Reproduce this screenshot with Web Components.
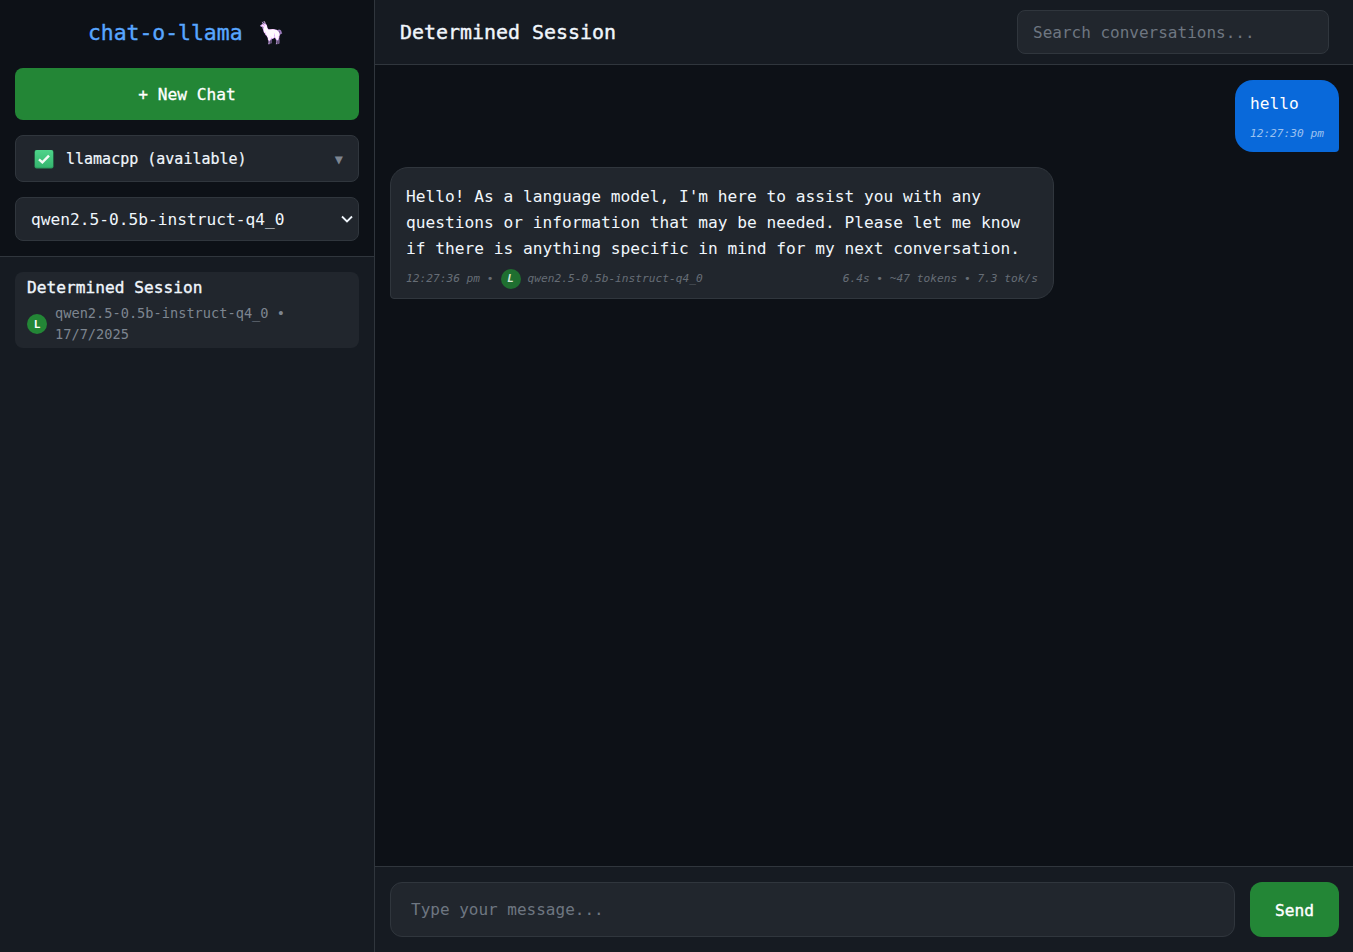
<!DOCTYPE html>
<html>
<head>
<meta charset="utf-8">
<title>chat-o-llama</title>
<style>
    html, body { height: 100%; margin: 0; }
    body {
        background: #0d1117;
        color: #f0f6fc;
        font-family: "DejaVu Sans Mono", "Liberation Mono", monospace;
        overflow: hidden;
    }
</style>
</head>
<body>

<co-app>
    <co-sidebar slot="sidebar">
        <co-conversation title-text="Determined Session" model="qwen2.5-0.5b-instruct-q4_0 •" date="17/7/2025"></co-conversation>
    </co-sidebar>
    <co-chat-header slot="header" title-text="Determined Session"></co-chat-header>
    <co-message role="user" time="12:27:30 pm">hello</co-message>
    <co-message role="assistant" time="12:27:36 pm" model="qwen2.5-0.5b-instruct-q4_0" stats="6.4s • ~47 tokens • 7.3 tok/s">Hello! As a language model, I'm here to assist you with any questions or information that may be needed. Please let me know if there is anything specific in mind for my next conversation.</co-message>
    <co-composer slot="composer"></co-composer>
</co-app>

<script type="text/javascript">
    class CoBase extends HTMLElement {
        constructor() {
            super();
            this.attachShadow({mode: 'open'});
        }
        attr(name) {
            return this.getAttribute(name) || '';
        }
    }

    class CoApp extends CoBase {
        connectedCallback() {
            this.shadowRoot.innerHTML = `
                <style>
                    :host { display: flex; height: 952px; }
                    .side { width: 375px; flex: none; }
                    .main { flex: 1; min-width: 0; display: flex; flex-direction: column; }
                    .messages {
                        flex: 1;
                        display: flex;
                        flex-direction: column;
                        gap: 15px;
                        padding: 15px 14px 15px 15px;
                        background: #0d1117;
                    }
                </style>
                <div class="side"><slot name="sidebar"></slot></div>
                <div class="main">
                    <slot name="header"></slot>
                    <div class="messages"><slot></slot></div>
                    <slot name="composer"></slot>
                </div>`;
        }
    }

    class CoSidebar extends CoBase {
        connectedCallback() {
            this.shadowRoot.innerHTML = `
                <style>
                    :host {
                        display: flex;
                        flex-direction: column;
                        height: 100%;
                        box-sizing: border-box;
                        border-right: 1px solid #30363d;
                        background: #161b22;
                    }
                    .top {
                        display: flex;
                        flex-direction: column;
                        padding: 15px;
                        background: #0d1117;
                        border-bottom: 1px solid #30363d;
                    }
                    h1 {
                        margin: 0 0 17px;
                        padding-right: 1px;
                        font-size: 21.4px;
                        line-height: 36px;
                        font-weight: 400;
                        -webkit-text-stroke: .4px #58a6ff;
                        text-align: center;
                        color: #58a6ff;
                    }
                    h1 .llama {
                        font-family: "Noto Color Emoji", sans-serif;
                        margin-left: 3px;
                        -webkit-text-stroke: 0;
                        filter: sepia(.6) hue-rotate(235deg) saturate(1.4);
                    }
                    .new {
                        height: 52px;
                        border: 0;
                        border-radius: 8px;
                        background: #238636;
                        color: #fff;
                        font-family: inherit;
                        font-size: 16.2px;
                        -webkit-text-stroke: .3px #fff;
                    }
                    .backend {
                        display: flex;
                        align-items: center;
                        height: 47px;
                        box-sizing: border-box;
                        margin-top: 15px;
                        padding: 0 15px 0 18px;
                        border: 1px solid #30363d;
                        border-radius: 8px;
                        background: #21262d;
                        font-size: 15px;
                    }
                    .backend .mark { width: 20px; height: 20px; flex: none; margin-right: 12px; }
                    .backend .name { flex: 1; -webkit-text-stroke: .2px #f0f6fc; }
                    .backend .arrow { color: #7d8590; font-size: 13.5px; }
                    .model { position: relative; margin-top: 15px; }
                    select {
                        display: block;
                        appearance: none;
                        height: 44px;
                        width: 100%;
                        padding: 0 15px;
                        border: 1px solid #30363d;
                        border-radius: 8px;
                        background-color: #21262d;
                        color: #f0f6fc;
                        font-family: inherit;
                        font-size: 16.2px;
                    }
                    .chevron {
                        position: absolute;
                        right: 6px;
                        top: 18px;
                        width: 12px;
                        height: 8px;
                        pointer-events: none;
                    }
                    .list { flex: 1; padding: 15px; }
                </style>
                <div class="top">
                    <h1>chat-o-llama <span class="llama">🦙</span></h1>
                    <button class="new">+ New Chat</button>
                    <div class="backend">
                        <svg class="mark" viewBox="0 0 20 20">
                            <defs>
                                <linearGradient id="tick" x1="0" y1="0" x2="0" y2="1">
                                    <stop offset="0" stop-color="#4ed48a"/>
                                    <stop offset="1" stop-color="#35b56f"/>
                                </linearGradient>
                            </defs>
                            <rect x=".5" y="1" width="19" height="18.5" rx="2" fill="#2a9a5c"/>
                            <rect x="1" y="1" width="18" height="17.5" rx="2" fill="url(#tick)"/>
                            <path d="M5 10.3l3.4 3.1L15 6.6" fill="none" stroke="#f2fbf5" stroke-width="2.4"/>
                        </svg>
                        <span class="name">llamacpp (available)</span>
                        <span class="arrow">▼</span>
                    </div>
                    <div class="model">
                        <select><option>qwen2.5-0.5b-instruct-q4_0</option></select>
                        <svg class="chevron" viewBox="0 0 12 8"><path d="M1 1.5l5 5 5-5" fill="none" stroke="#f0f6fc" stroke-width="1.8"/></svg>
                    </div>
                </div>
                <div class="list"><slot></slot></div>`;
        }
    }

    class CoConversation extends CoBase {
        connectedCallback() {
            this.shadowRoot.innerHTML = `
                <style>
                    :host {
                        display: block;
                        padding: 6px 12px 3px;
                        border-radius: 8px;
                        background: #21262d;
                    }
                    .title { font-size: 16.2px; line-height: 20px; -webkit-text-stroke: .35px #f0f6fc; color: #f0f6fc; }
                    .sub { display: flex; align-items: center; gap: 8px; margin-top: 5px; }
                    .badge {
                        width: 20px; height: 20px; flex: none;
                        display: flex; align-items: center; justify-content: center;
                        border-radius: 50%;
                        background: #238636;
                        color: #fff;
                        font-size: 11px;
                        font-weight: 600;
                    }
                    .text { font-size: 13.65px; line-height: 21px; color: #7d8590; }
                </style>
                <div class="title">${this.attr('title-text')}</div>
                <div class="sub">
                    <span class="badge">L</span>
                    <span class="text">${this.attr('model')} ${this.attr('date')}</span>
                </div>`;
        }
    }

    class CoChatHeader extends CoBase {
        connectedCallback() {
            this.shadowRoot.innerHTML = `
                <style>
                    :host {
                        display: flex;
                        flex: none;
                        align-items: center;
                        justify-content: space-between;
                        height: 65px;
                        box-sizing: border-box;
                        padding: 0 24px 0 25px;
                        border-bottom: 1px solid #30363d;
                        background: #161b22;
                    }
                    h2 { margin: 0; font-size: 19.95px; font-weight: 400; -webkit-text-stroke: .4px #f0f6fc; }
                    input {
                        width: 312px;
                        height: 44px;
                        box-sizing: border-box;
                        padding: 0 15px;
                        border: 1px solid #30363d;
                        border-radius: 8px;
                        background: #21262d;
                        color: #f0f6fc;
                        font-family: inherit;
                        font-size: 16px;
                    }
                    input::placeholder { color: #6e7681; opacity: 1; }
                </style>
                <h2>${this.attr('title-text')}</h2>
                <input placeholder="Search conversations...">`;
        }
    }

    class CoMessage extends CoBase {
        connectedCallback() {
            let isUser = this.attr('role') === 'user';
            let footer = isUser
                ? `<span>${this.attr('time')}</span>`
                : `<span class="left">${this.attr('time')} • <span class="badge">L</span> ${this.attr('model')}</span><span>${this.attr('stats')}</span>`;
            this.shadowRoot.innerHTML = `
                <style>
                    :host { display: block; align-self: ${isUser ? 'flex-end' : 'flex-start'}; box-sizing: border-box; }
                    .bubble {
                        box-sizing: border-box;
                        border-radius: 18px;
                        padding: ${isUser ? '11px 15px 8px' : '16px 15px 9px'};
                        ${isUser
                            ? 'background: #0969da; color: #fff; border-bottom-right-radius: 4px;'
                            : 'width: 664px; background: #21262d; border: 1px solid #30363d; border-bottom-left-radius: 4px;'}
                    }
                    .body { font-size: 16.2px; line-height: 26px; }
                    .meta {
                        display: flex;
                        justify-content: space-between;
                        align-items: center;
                        margin-top: 7px;
                        font-size: 11.2px;
                        line-height: 20px;
                        font-style: italic;
                        color: ${isUser ? 'rgba(255,255,255,.6)' : '#666d76'};
                    }
                    .left { display: flex; align-items: center; gap: 7px; }
                    .badge {
                        width: 20px; height: 20px;
                        display: inline-flex; align-items: center; justify-content: center;
                        border-radius: 50%;
                        background: #1f6f30;
                        color: #d6e6d8;
                        font-size: 11px;
                        font-weight: 600;
                    }
                </style>
                <div class="bubble">
                    <div class="body"><slot></slot></div>
                    <div class="meta">${footer}</div>
                </div>`;
        }
    }

    class CoComposer extends CoBase {
        connectedCallback() {
            this.shadowRoot.innerHTML = `
                <style>
                    :host {
                        display: flex;
                        flex: none;
                        gap: 15px;
                        height: 86px;
                        box-sizing: border-box;
                        padding: 15px 14px 15px 15px;
                        border-top: 1px solid #30363d;
                        background: #161b22;
                    }
                    input {
                        flex: 1;
                        min-width: 0;
                        box-sizing: border-box;
                        padding: 0 20px;
                        border: 1px solid #30363d;
                        border-radius: 12px;
                        background: #21262d;
                        color: #f0f6fc;
                        font-family: inherit;
                        font-size: 16px;
                    }
                    input::placeholder { color: #6e7681; opacity: 1; }
                    button {
                        width: 89px;
                        padding: 2px 0 0;
                        border: 0;
                        border-radius: 12px;
                        background: #238636;
                        color: #fff;
                        font-family: inherit;
                        font-size: 16.2px;
                        -webkit-text-stroke: .4px #fff;
                    }
                </style>
                <input placeholder="Type your message...">
                <button>Send</button>`;
        }
    }

    window.customElements.define('co-app', CoApp);
    window.customElements.define('co-sidebar', CoSidebar);
    window.customElements.define('co-conversation', CoConversation);
    window.customElements.define('co-chat-header', CoChatHeader);
    window.customElements.define('co-message', CoMessage);
    window.customElements.define('co-composer', CoComposer);
</script>
</body>
</html>
